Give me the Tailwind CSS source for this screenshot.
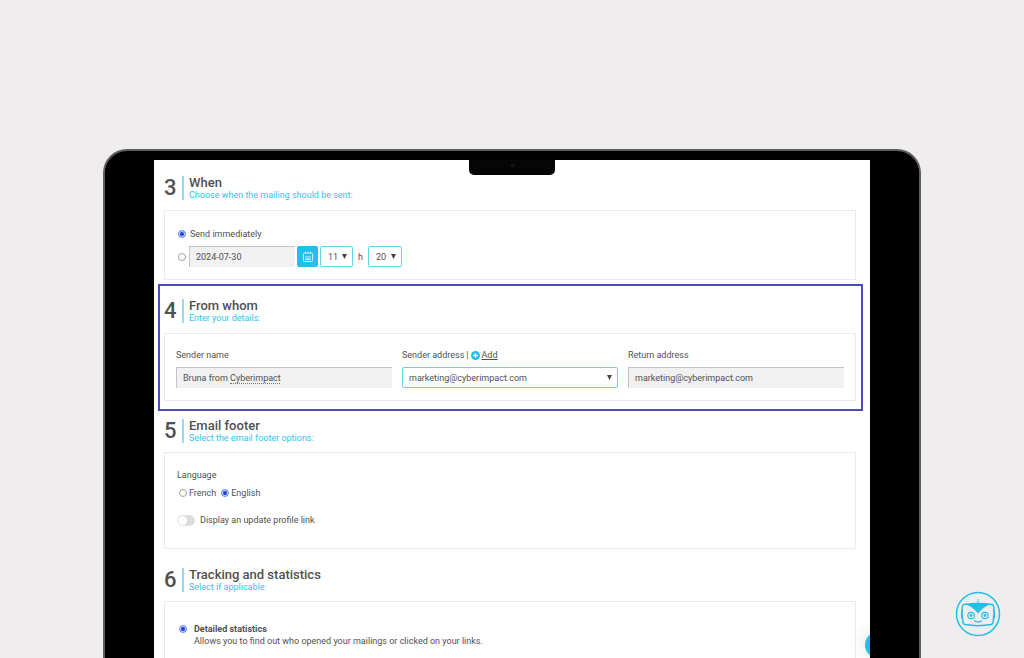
<!DOCTYPE html>
<html lang="en">
<head>
<meta charset="utf-8">
<meta name="viewport" content="width=device-width, initial-scale=1">
<title>Mailing settings</title>
<script src="https://cdn.jsdelivr.net/npm/@tailwindcss/browser@4"></script>
</head>
<body class="relative flex h-screen flex-col overflow-hidden bg-[#efedee] px-[103px] pt-[149px] font-[Roboto,sans-serif] text-[9px] leading-3 text-[#505050]">
<!-- Laptop frame -->
<div class="min-h-0 flex-1 overflow-hidden rounded-t-[24px] border-2 border-b-0 border-[#5c5e5e] bg-black px-[49px] pt-[9px]">
  <main class="relative h-full overflow-hidden bg-white">
    <!-- Camera notch -->
    <div class="absolute top-0 left-1/2 flex h-[15px] w-[86px] -translate-x-1/2 items-center justify-center rounded-b-[5px] bg-[#050505]"><span class="mb-1 size-[3px] rounded-full border border-[#2c2c2c]"></span></div>

    <section class="pt-4 pr-[14px] pl-[10px]">
      <header class="flex h-6 items-stretch">
        <span class="w-[18px] text-[22px] leading-6 font-medium">3</span>
        <div class="border-l-2 border-[#8edcf2] pl-[5px]">
          <h2 class="text-[13px] leading-[14px] font-medium">When</h2>
          <p class="text-[9px] leading-[10px] text-[#35c4eb]">Choose when the mailing should be sent:</p>
        </div>
      </header>
      <div class="mt-[10px] border border-[#ebebeb] px-[13px] pt-[17px] pb-3">
        <label class="flex items-center gap-1"><input type="radio" name="when" checked class="size-2 appearance-none rounded-full border border-[#a0a0a0] bg-white checked:border-[#7fa5f8] checked:bg-[#2436d8] checked:shadow-[inset_0_0_0_1px_#c5dcff]">Send immediately</label>
        <div class="mt-[6px] flex items-center">
          <input type="radio" name="when" aria-label="Send at a chosen date" class="mr-[3px] size-2 appearance-none rounded-full border border-[#a0a0a0] bg-white">
          <input type="text" aria-label="Date" value="2024-07-30" class="h-[21px] w-[106px] border-t border-l border-[#c4c4c4] bg-[#f1f1f1] pl-[6px]">
          <button type="button" aria-label="Open calendar" class="ml-[2px] flex h-[21px] w-[21px] items-center justify-center rounded-[2px] bg-[#22c0e8]">
            <svg class="size-3" viewBox="0 0 12 12" fill="none" stroke="#c8effa" stroke-width="1"><rect x="1.500" y="2" width="9" height="8.500" rx="1"/><path d="M3.500 .7v2M6 .7v2M8.500 .7v2M4 5v4M6 5v4M8 5v4M3.500 8.500h5"/></svg>
          </button>
          <span class="relative ml-[2px]">
            <select aria-label="Hour" class="block h-[21px] w-[33px] appearance-none rounded-[2px] border border-[#67d3f0] bg-white pl-[7px]"><option>11</option></select>
            <svg class="pointer-events-none absolute top-2 right-[6px] h-[5px] w-[5px]" viewBox="0 0 5 5" fill="#444"><path d="M0 0h5L2.500 5z"/></svg>
          </span>
          <span class="w-[15px] text-center">h</span>
          <span class="relative">
            <select aria-label="Minutes" class="block h-[21px] w-[34px] appearance-none rounded-[2px] border border-[#67d3f0] bg-white pl-[7px]"><option>20</option></select>
            <svg class="pointer-events-none absolute top-2 right-[6px] h-[5px] w-[5px]" viewBox="0 0 5 5" fill="#444"><path d="M0 0h5L2.500 5z"/></svg>
          </span>
        </div>
      </div>
    </section>

    <!-- Highlighted section -->
    <section class="mt-1 mr-[7px] ml-1 border-2 border-[#4a4bc4] pt-[13px] pr-[5px] pb-2 pl-1">
      <header class="flex h-6 items-stretch">
        <span class="w-[18px] text-[22px] leading-6 font-medium">4</span>
        <div class="border-l-2 border-[#8edcf2] pl-[5px]">
          <h2 class="text-[13px] leading-[14px] font-medium">From whom</h2>
          <p class="text-[9px] leading-[10px] text-[#35c4eb]">Enter your details:</p>
        </div>
      </header>
      <div class="mt-[10px] grid grid-cols-3 gap-[10px] border border-[#ebebeb] px-[11px] pt-[15px] pb-3">
        <div>
          <label for="sender" class="block">Sender name</label>
          <div class="relative mt-[6px]">
            <input id="sender" type="text" value="Bruna from Cyberimpact" class="block h-[21px] w-full border-t border-l border-[#c4c4c4] bg-[#f1f1f1] pl-[6px]">
            <span class="absolute top-4 left-[54px] w-[50px] border-b border-dotted border-[#777]"></span>
          </div>
        </div>
        <div>
          <div class="flex items-center"><label for="address">Sender address</label><span class="mx-[2px]">|</span>
            <svg class="mr-[2px] size-[9px]" viewBox="0 0 10 10"><circle cx="5" cy="5" r="5" fill="#22c0e8"/><path d="M5 2.500v5M2.500 5h5" stroke="#fff" stroke-width="1.400"/></svg>
            <a href="#" class="underline">Add</a></div>
          <div class="relative mt-[6px]">
            <select id="address" class="block h-[21px] w-full appearance-none rounded-[2px] border border-[#67d3f0] bg-white pl-[6px]"><option>marketing@cyberimpact.com</option></select>
            <svg class="pointer-events-none absolute top-2 right-[6px] h-[5px] w-[5px]" viewBox="0 0 5 5" fill="#444"><path d="M0 0h5L2.500 5z"/></svg>
          </div>
        </div>
        <div>
          <label for="return" class="block">Return address</label>
          <input id="return" type="text" value="marketing@cyberimpact.com" class="mt-[6px] block h-[21px] w-full border-t border-l border-[#c4c4c4] bg-[#f1f1f1] pl-[6px]">
        </div>
      </div>
    </section>

    <section class="pt-2 pr-[14px] pl-[10px]">
      <header class="flex h-6 items-stretch">
        <span class="w-[18px] text-[22px] leading-6 font-medium">5</span>
        <div class="border-l-2 border-[#8edcf2] pl-[5px]">
          <h2 class="text-[13px] leading-[14px] font-medium">Email footer</h2>
          <p class="text-[9px] leading-[10px] text-[#35c4eb]">Select the email footer options:</p>
        </div>
      </header>
      <fieldset class="mt-[9px] border border-[#ebebeb] px-3 pt-4 pb-[22px]">
        <div>Language</div>
        <div class="mt-[6px] flex gap-[5px] pl-[2px]">
          <label class="flex items-center gap-[2px]"><input type="radio" name="language" class="size-2 appearance-none rounded-full border border-[#a0a0a0] bg-white">French</label>
          <label class="flex items-center gap-[2px]"><input type="radio" name="language" checked class="size-2 appearance-none rounded-full border border-[#a0a0a0] bg-white checked:border-[#7fa5f8] checked:bg-[#2436d8] checked:shadow-[inset_0_0_0_1px_#c5dcff]">English</label>
        </div>
        <label class="mt-[15px] flex items-center gap-[5px]"><input type="checkbox" role="switch" class="h-[11px] w-[18px] appearance-none rounded-full border border-[#e2e2e2] bg-[#dcdcdc] before:block before:size-[9px] before:rounded-full before:bg-white">Display an update profile link</label>
      </fieldset>
    </section>

    <section class="pt-[19px] pr-[14px] pl-[10px]">
      <header class="flex h-6 items-stretch">
        <span class="w-[18px] text-[22px] leading-6 font-medium">6</span>
        <div class="border-l-2 border-[#8edcf2] pl-[5px]">
          <h2 class="text-[13px] leading-[14px] font-medium">Tracking and statistics</h2>
          <p class="text-[9px] leading-[10px] text-[#35c4eb]">Select if applicable:</p>
        </div>
      </header>
      <div class="mt-[9px] border border-[#ebebeb] px-[14px] pt-[21px] pb-8">
        <label class="flex items-start gap-[7px]"><input type="radio" name="stats" checked class="mt-[2px] size-2 shrink-0 appearance-none rounded-full border border-[#a0a0a0] bg-white checked:border-[#7fa5f8] checked:bg-[#2436d8] checked:shadow-[inset_0_0_0_1px_#c5dcff]">
          <span><b class="block font-bold">Detailed statistics</b>Allows you to find out who opened your mailings or clicked on your links.</span></label>
      </div>
    </section>

    <!-- Floating chat bubble, cut off by the screen edge -->
    <button type="button" aria-label="Open chat" class="absolute -right-[21px] bottom-0 size-[26px] rounded-full bg-[#22c0e8] shadow-[0_0_20px_#0002]"></button>
  </main>
</div>

<svg class="absolute right-[23px] bottom-[21px] size-[46px]" viewBox="0 0 46 46" fill="none" stroke="#22bfe6" role="img" aria-label="Robot logo">
  <circle cx="23" cy="23" r="21.500" stroke-width="1.500"/>
  <path d="M23 8v5" stroke-width=".8"/>
  <path d="M9 13.500Q23 11.700 37 13.500Q38.500 13.700 38.800 16Q39.500 23 38 31.500Q37.600 33.200 36 33.500Q23 35.800 10 33.500Q8.400 33.200 8 31.500Q6.500 23 7.200 16Q7.500 13.700 9 13.500Z" stroke-width="1.500"/>
  <path d="M7 18.500Q5.500 23 7 28M39 18.500Q40.500 23 39 28" stroke-width="1"/>
  <path d="M11 13.200Q23 12 35 13.200Q28 16 23 22.500Q18 16 11 13.200Z" fill="#22bfe6" stroke="none"/>
  <circle cx="16" cy="24.500" r="3.200" stroke-width="1.200"/><circle cx="30" cy="24.500" r="3.200" stroke-width="1.200"/>
  <circle cx="16" cy="24.500" r="1.400" fill="#22bfe6" stroke="none"/><circle cx="30" cy="24.500" r="1.400" fill="#22bfe6" stroke="none"/>
  <path d="M19 29.800Q23 32 27 29.800" stroke-width="1.200"/>
</svg>
</body>
</html>
